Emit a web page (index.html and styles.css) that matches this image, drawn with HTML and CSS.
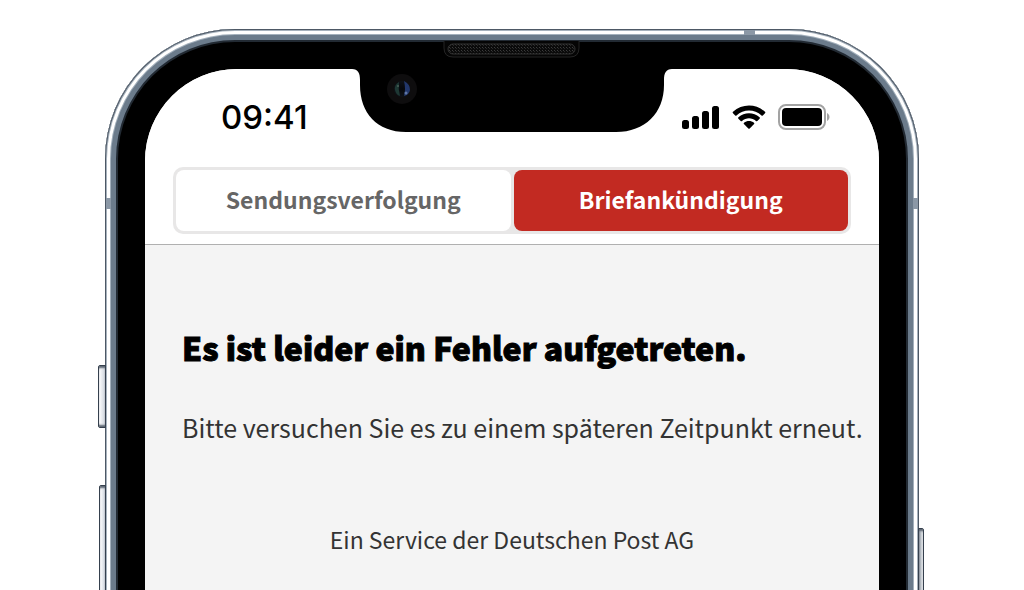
FILE: index.html
```html
<!DOCTYPE html>
<html lang="de">
<head>
  <meta charset="UTF-8" />
  <meta name="viewport" content="width=device-width, initial-scale=1" />
  <title>Briefankündigung</title>
  <link rel="stylesheet" href="styles.css">
</head>
<body>

  <div class="stage">
    <div class="phone">
      <span class="key key-silent"></span>
      <span class="key key-volume"></span>
      <span class="key key-power"></span>
      <span class="antenna antenna-top"></span>
      <span class="antenna antenna-left"></span>
      <span class="antenna antenna-right"></span>

      <div class="screen">
        <header class="top">
          <div class="status">
            <span class="time">09:41</span>
            <div class="status-icons">
              <svg width="38" height="24" viewBox="0 0 38 24" aria-hidden="true">
                <rect x="0" y="15" width="7" height="9" rx="2.500" />
                <rect x="10" y="11" width="7" height="13" rx="2.500" />
                <rect x="20" y="6" width="7" height="18" rx="2.500" />
                <rect x="30" y="1" width="7" height="23" rx="2.500" />
              </svg>
              <svg width="34" height="24" viewBox="0 0 34 24" aria-hidden="true">
                <path d="M1 8.2Q.3 7.5 1 6.8C10-1.6 24-1.6 33 6.8Q33.7 7.5 33 8.2L30.8 10.4Q30.2 11 29.5 10.400C22.500 3.900 11.500 3.900 4.500 10.400Q3.800 11 3.200 10.400Z" />
                <path d="M6.400 13.700Q5.700 13 6.400 12.300C12.500 6.900 21.500 6.900 27.600 12.300Q28.300 13 27.600 13.700L25.300 15.900Q24.700 16.500 24 15.900C20 12.300 14 12.300 10 15.900Q9.300 16.500 8.700 15.900Z" />
                <path d="M11.900 19Q11.300 18.300 12 17.700C14.800 15.500 19.200 15.500 22 17.700Q22.700 18.300 22.100 19L17.700 23.400Q17 24 16.300 23.400Z" />
              </svg>
              <svg width="52" height="26" viewBox="0 0 52 26" aria-hidden="true">
                <rect x="1" y="1" width="46" height="24" rx="7" fill="#fff" stroke="#a3a3a3" stroke-width="2" />
                <rect x="4" y="4" width="40" height="18" rx="4" />
                <path d="M49 9C52.300 10.500 52.300 15.500 49 17Z" fill="#a3a3a3" />
              </svg>
            </div>
          </div>
          <nav class="tabs">
            <button type="button" class="tab">Sendungsverfolgung</button>
            <button type="button" class="tab active">Briefankündigung</button>
          </nav>
        </header>

        <main class="message">
          <h1>Es ist leider ein Fehler aufgetreten.</h1>
          <p>Bitte versuchen Sie es zu einem späteren Zeitpunkt erneut.</p>
          <footer>Ein Service der Deutschen Post AG</footer>
        </main>
      </div>

      <!-- notch with earpiece and front camera -->
      <svg class="notch" width="322" height="92" viewBox="0 0 322 92" aria-hidden="true">
        <defs>
          <pattern id="mesh" width="3" height="3" patternUnits="userSpaceOnUse">
            <rect width="3" height="3" fill="#0b0b0b" />
            <rect width="1" height="1" fill="#3c3c3c" />
            <rect x="1" y="1" width="1" height="1" fill="#292929" />
          </pattern>
          <radialGradient id="lens">
            <stop offset="0" stop-color="#05070b" />
            <stop offset="1" stop-color="#0e1218" />
          </radialGradient>
        </defs>
        <path d="M0 28H2C8 28 10 32 10 39V44C10 72 27 91 56 91H266C295 91 314 72 314 44V39C314 32 316 28 322 28V20H0Z" />
        <path d="M94 0V7Q94 16 103 16H220Q229 16 229 7V0" fill="#050505" stroke="#252525" />
        <rect x="98" y="3" width="127" height="10" rx="5" fill="url(#mesh)" stroke="#333" />
        <circle cx="52" cy="48" r="15" fill="#0e0d0e" />
        <circle cx="52" cy="48" r="8" fill="url(#lens)" />
        <path d="M49 41Q44 44 45 49Q46 54 50 55Q48 48 49 41Z" fill="#1e3834" />
        <path d="M54 40Q60 43 60 49Q59 54 54 55Q56 48 54 40Z" fill="#22376b" />
        <circle cx="56" cy="52" r="1.500" fill="#5f76a6" />
        <circle cx="48" cy="45" r="1" fill="#4a6059" />
      </svg>
    </div>
  </div>

</body>
</html>
```
FILE: styles.css
```css
body {
  margin: 0;
  background: #fff;
  font-family: "Noto Sans CJK SC", "Noto Sans", sans-serif;
}
.stage {
  height: 100vh;
  overflow: hidden;
  box-sizing: border-box;
  padding: 29px 105px 0;
}

/* phone body */
.phone {
  position: relative;
  box-sizing: border-box;
  min-height: calc(100vh + 120px);
  padding: 40px;
  display: flex;
  border-radius: 130px;
  background: #000;
  box-shadow:
    inset 0 0 0 1px #4d5865,
    inset 0 0 0 2px #a7b2bd,
    inset 0 0 0 5px #fff,
    inset 0 0 0 6px #a3b0bc,
    inset 0 0 0 11px #6b7b8b,
    inset 0 0 0 13px #222a33;
}
.key {
  position: absolute;
  box-sizing: border-box;
  border: 1px solid #35404d;
  background: linear-gradient(90deg, #fff, #cfd5dd);
  box-shadow: inset 0 3px 2px -1px #5c6672, inset 0 -3px 2px -1px #5c6672;
}
.key-silent {
  left: -7px;
  top: 336px;
  width: 8px;
  height: 63px;
  border-radius: 2px 0 0 2px;
}
.key-volume {
  left: -6px;
  top: 456px;
  width: 7px;
  height: 140px;
  border-radius: 2px 0 0 2px;
}
.key-power {
  right: -5px;
  top: 499px;
  width: 6px;
  height: 160px;
  border-radius: 0 2px 2px 0;
  background: linear-gradient(90deg, #8b949e, #f4f6f8);
}
.antenna {
  position: absolute;
  background: #8b98a6;
}
.antenna-top {
  top: 1px;
  right: 164px;
  width: 11px;
  height: 5px;
}
.antenna-left,
.antenna-right {
  top: 169px;
  width: 5px;
  height: 11px;
}
.antenna-left {
  left: 1px;
}
.antenna-right {
  right: 1px;
}
.notch {
  position: absolute;
  top: 12px;
  left: 50%;
  margin-left: -162px;
}

/* screen */
.screen {
  flex: 1;
  min-width: 0;
  display: flex;
  flex-direction: column;
  overflow: hidden;
  border-radius: 92px;
  background: #f4f4f4;
}
.top {
  padding: 28px 28px 10px;
  background: #fff;
  border-bottom: 1px solid #b0b0b0;
}
.status {
  display: flex;
  justify-content: space-between;
  align-items: center;
  height: 40px;
  padding: 0 21px 0 48px;
}
.time {
  font-family: Inter, sans-serif;
  font-size: 33px;
  font-weight: 500;
}
.status-icons {
  display: flex;
  align-items: center;
  gap: 12px;
}
.tabs {
  display: flex;
  gap: 3px;
  margin-top: 30px;
  padding: 3px;
  border-radius: 10px;
  background: #e8e7e7;
}
.tab {
  flex: 1;
  height: 61px;
  padding: 0 0 4px;
  border: none;
  border-radius: 8px;
  background: #fff;
  color: #666;
  font-family: inherit;
  font-size: 23px;
  font-weight: 700;
  cursor: pointer;
}
.tab.active {
  background: #c22a22;
  color: #fff;
}
.message {
  padding: 78px 28px 0 37px;
  color: #333;
}
h1 {
  margin: 0;
  color: #000;
  font-size: 32px;
  font-weight: 900;
  line-height: 48px;
  white-space: nowrap;
  -webkit-text-stroke: 1px #000;
}
p {
  margin: 36px 0 0;
  font-size: 25px;
  line-height: 40px;
  white-space: nowrap;
}
footer {
  margin-top: 72px;
  margin-right: 9px;
  font-size: 23px;
  line-height: 40px;
  text-align: center;
}
```
